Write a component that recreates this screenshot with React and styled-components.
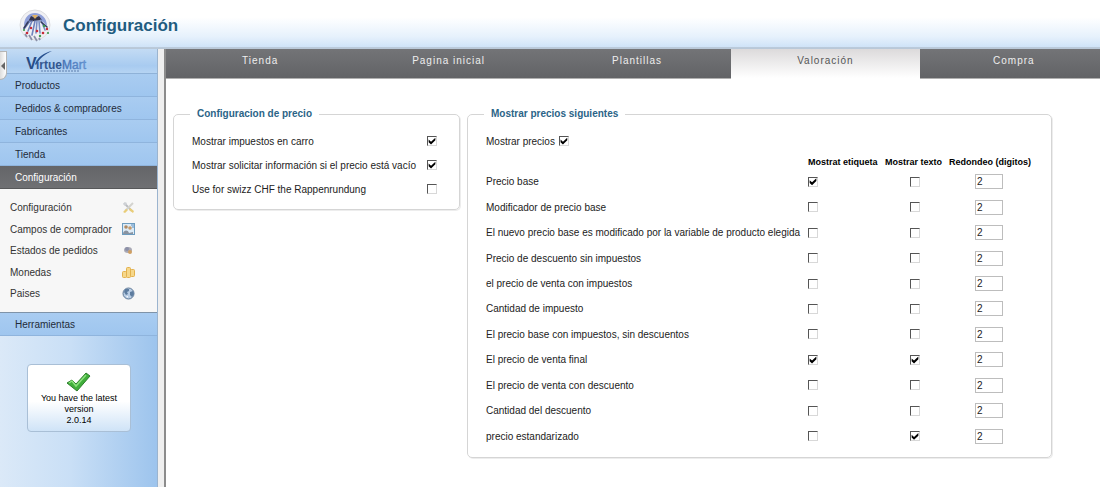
import React, { useState } from "react";
import styled, { createGlobalStyle } from "styled-components";

const GlobalStyle = createGlobalStyle`
    * {
        box-sizing: border-box;
    }
    body {
        margin: 0;
        background-color: #ffffff;
        color: #222222;
        font-family: "Liberation Sans", Arial, sans-serif;
        font-size: 10px;
    }
`

const Page = styled.div`
    display: flex;
    flex-direction: column;
    min-height: 100vh;
`

const Header = styled.header`
    display: flex;
    align-items: center;
    gap: 12px;
    height: 49px;
    padding: 2px 0 0 19px;
    background: linear-gradient(#ffffff 0%, #ffffff 35%, #e6f1fc 75%, #cfe3f7 96%, #b9c8d8 97%);
`

const Title = styled.h1`
    margin: 0;
    font-size: 17px;
    color: #1f5c80;
`

const Body = styled.div`
    display: flex;
    flex: 1;
`

const Sidebar = styled.aside`
    flex: 0 0 158px;
    border-right: 1px solid #9bb4cf;
    background: linear-gradient(90deg, #dbe9f8 0%, #c9dff6 45%, #9dc4ed 100%);
`

const Gutter = styled.div`
    flex: 0 0 8px;
    background-color: #efefef;
    border-right: 2px solid #8c8c8c;
`

const LogoBar = styled.div`
    position: relative;
    height: 25px;
    padding-left: 26px;
    border-bottom: 1px solid #8fb2d8;
    background: linear-gradient(#c3dbf4, #a8cbf0 70%, #b6d4f3);
`

const Collapse = styled.button`
    position: absolute;
    left: 0;
    top: 2px;
    width: 7px;
    height: 29px;
    padding: 0;
    border: 1px solid #b5b5b5;
    border-left: 0;
    border-radius: 0 0 8px 0;
    background: linear-gradient(90deg, #dddddd, #ffffff);
    line-height: 0;
`

const MenuLink = styled.a`
    display: block;
    height: 23px;
    padding-left: 15px;
    line-height: 24px;
    text-decoration: none;
    color: ${(props) => (props.$active ? "#ffffff" : "#1f2b3a")};
    border-bottom: 1px solid ${(props) => (props.$active ? "#57585a" : "#8fb4dd")};
    background: ${(props) =>
        props.$active ? "linear-gradient(#646568, #6f7073)" : "linear-gradient(#a9ccf1, #9fc6ef)"};
`

const SubMenu = styled.ul`
    display: flex;
    flex-direction: column;
    justify-content: space-between;
    min-height: 124px;
    margin: 0;
    padding: 8px 0 8px 10px;
    list-style: none;
    background-color: #f7f7f7;
    border-bottom: 1px solid #7f93a8;
`

const SubItem = styled.li`
    display: flex;
    align-items: center;
    justify-content: space-between;
    height: 21px;
    padding-right: 22px;
`

const SubLink = styled.a`
    color: #333333;
    text-decoration: none;
`

const VersionBox = styled.div`
    display: flex;
    flex-direction: column;
    align-items: center;
    width: 104px;
    height: 68px;
    margin: 28px 0 0 27px;
    padding: 7px 10px 0;
    border: 1px solid #a9bfd6;
    border-radius: 4px;
    background: linear-gradient(#ffffff 55%, #cfe3f7);
    font-size: 9px;
    line-height: 11px;
    text-align: center;
    color: #000000;
`

const Main = styled.main`
    flex: 1;
    min-width: 0;
    overflow: hidden;
`

const Tabs = styled.nav`
    display: flex;
    width: calc(100% + 8px);
    height: 30px;
`

const Tab = styled.button`
    flex: 1;
    padding: 0 0 7px;
    border: 0;
    border-bottom: 1px solid ${(props) => (props.$active ? "#ffffff" : "#b0b0b0")};
    background: ${(props) =>
        props.$active ? "linear-gradient(#dcdadb, #ffffff)" : "linear-gradient(#737477, #626366)"};
    color: ${(props) => (props.$active ? "#555555" : "#eeeeee")};
    font-family: inherit;
    font-size: 10px;
    letter-spacing: 1px;
`

const Panels = styled.div`
    display: flex;
    align-items: flex-start;
    gap: 7px;
    padding: 28px 0 28px 7px;
`

const Panel = styled.fieldset`
    margin: 0;
    padding: 0 18px 8px;
    border: 1px solid #d5d5d5;
    border-radius: 5px;
    box-shadow: 1px 1px 0 #ededed;
`

const Legend = styled.legend`
    height: 14px;
    margin-left: -2px;
    padding: 0 7px;
    line-height: 14px;
    font-weight: bold;
    color: #2b6487;
`

const OptionTable = styled.table`
    border-collapse: collapse;
    margin-top: 8px;

    th {
        font-weight: normal;
        text-align: left;
        padding: 0;
        width: 235px;
    }
    td {
        padding: 0;
        width: 14px;
    }
    tr {
        height: 24px;
    }
`

const ShowPrices = styled.label`
    display: flex;
    align-items: center;
    gap: 4px;
    height: 24px;
    margin-top: 8px;
`

const PriceTable = styled.table`
    border-collapse: collapse;
    margin-top: 2px;
    height: 294px;

    thead th {
        height: 14px;
        padding: 0;
        font-size: 9px;
        text-align: left;
        white-space: nowrap;
        color: #000000;
    }
    tbody th {
        padding: 0;
        font-weight: normal;
        text-align: left;
        white-space: nowrap;
    }
    td {
        padding: 0;
    }
    td + td {
        padding-right: 4px;
    }
`

const Col = styled.col`
    width: ${(props) => props.$width}px;
`

const Check = styled.input.attrs({ type: "checkbox" })`
    appearance: none;
    display: block;
    width: 10px;
    height: 10px;
    margin: ${(props) => (props.$centered ? "0 auto" : "0")};
    border: 1px solid;
    border-color: #555555 #d8d8d8 #d8d8d8 #555555;
    background-color: #ffffff;

    &:checked::before {
        content: "";
        display: block;
        width: 8px;
        height: 8px;
        background-color: #000000;
        clip-path: polygon(8% 32%, 38% 58%, 92% 8%, 92% 42%, 38% 94%, 8% 66%);
    }
`

const Digits = styled.input`
    display: block;
    width: 28px;
    height: 15px;
    margin: 0 auto;
    padding: 0 1px;
    border: 1px solid #bdbdbd;
    background-color: #ffffff;
    color: #222222;
    font-family: inherit;
    font-size: 10px;
`

const HeaderIcon = () => (
    <svg width="32" height="34" viewBox="0 0 32 34" aria-hidden="true">
        <circle cx="16" cy="16" r="15" fill="#f0f0f4" stroke="#dddddf" />
        <path d="M5 17C5 8 10 4 16 4s12 5 12 13l-5-5-7-3-6 3z" fill="#8f9fd8" />
        <path d="M12 7l4 2 4-2 3 4-7 1-7 1z" fill="#34344c" />
        <path d="M13 6l6 0-3 4z" fill="#e0b060" />
        <g fill="none" strokeWidth="1.6" strokeLinecap="round">
            <path d="M11 12L5 20M13 12L9 22M16 12l-3 14" stroke="#6f83bd" />
            <path d="M18 12l-1 12M20 12l1 12M22 11l4 10" stroke="#7a8fc4" />
            <path d="M9 13l-4 6M22 13l6 5" stroke="#353a5c" />
        </g>
        <g fill="#c62a38">
            <circle cx="8" cy="24" r="1.3" />
            <circle cx="12" cy="19" r="1.2" />
            <circle cx="18" cy="22" r="1.3" />
            <circle cx="24" cy="24" r="1.3" />
            <circle cx="28" cy="20" r="1.2" />
        </g>
        <g fill="#3d9a4c">
            <circle cx="25" cy="17" r="1.2" />
            <circle cx="21" cy="27" r="1.2" />
            <circle cx="29" cy="24" r="1.1" />
            <circle cx="5" cy="21" r="1.1" />
        </g>
        <path d="M10 26l3 5M15 27l3 5M6 25l2 3M20 29l1 2" stroke="#8a8fa8" strokeWidth="1.8" />
    </svg>
)

const Logo = () => (
    <svg width="62" height="24" viewBox="0 0 62 24" role="img" aria-label="VirtueMart">
        <defs>
            <linearGradient id="mart" x1="0" x2="1">
                <stop offset="0" stopColor="#2f5797" />
                <stop offset="1" stopColor="#6f9fdc" />
            </linearGradient>
        </defs>
        <path d="M9 15C12 8 17 4 26 2 19 5 14 9 10 16z" fill="#27508f" />
        <text x="0" y="20" fontSize="16" fontWeight="bold" fill="#284c85">V</text>
        <text x="10" y="20" fontSize="12" fontWeight="bold" fill="#33588f">irtue</text>
        <text x="36" y="20" fontSize="12" fill="url(#mart)" stroke="#5787c8" strokeWidth="0.4">Mart</text>
        <path d="M15 22h38" stroke="#5c7dab" strokeDasharray="2 1" />
    </svg>
)

const ToolsIcon = () => (
    <svg width="13" height="13" viewBox="0 0 13 13" aria-hidden="true">
        <path d="M2 2l8 8" stroke="#b9bcc0" strokeWidth="2" />
        <path d="M1 3l3-2 1 2-2 2z" fill="#cfd2d6" />
        <path d="M11 2L3 10" stroke="#d3d3cf" strokeWidth="2" />
        <path d="M1 11l3-3 2 1-3 3zM8 7l4 3-1 2-4-3z" fill="#e9cd78" />
    </svg>
)

const FieldsIcon = () => (
    <svg width="13" height="13" viewBox="0 0 13 13" aria-hidden="true">
        <rect x="0.5" y="0.5" width="12" height="11" fill="#dcebf7" stroke="#6d9cbf" />
        <circle cx="4" cy="4" r="1.8" fill="#b08a62" />
        <circle cx="8" cy="5" r="1.8" fill="#c79a6a" />
        <path d="M1 11c0-4 5-5 6-1l4-1v2z" fill="#8a93a0" />
        <path d="M9 2h3M10 4h2" stroke="#5b8fc0" />
    </svg>
)

const StatesIcon = () => (
    <svg width="13" height="13" viewBox="0 0 13 13" aria-hidden="true">
        <ellipse cx="6" cy="6" rx="4" ry="3" fill="#a9a9b5" />
        <circle cx="5" cy="5" r="2" fill="#8c90a8" />
        <circle cx="8" cy="8" r="2" fill="#cf9f62" />
    </svg>
)

const CoinsIcon = () => (
    <svg width="13" height="13" viewBox="0 0 13 13" aria-hidden="true">
        <g fill="#f6d78a" stroke="#e3b14c">
            <rect x="0.5" y="5.5" width="4" height="6" rx="1" />
            <rect x="4.5" y="1.5" width="4" height="10" rx="1" />
            <rect x="8.5" y="3.5" width="4" height="7" rx="1" />
        </g>
    </svg>
)

const GlobeIcon = () => (
    <svg width="13" height="13" viewBox="0 0 13 13" aria-hidden="true">
        <circle cx="6.5" cy="6.5" r="5.5" fill="#b9cde4" stroke="#5e7896" />
        <path d="M3 2l4 0 0 2-2 1 1 2-2 1-2-3zM8 5l3-1 1 3-2 3-2-2z" fill="#5d7c9f" />
        <path d="M4 9l2 0 0 2z" fill="#f3f7fb" />
    </svg>
)

const TickIcon = () => (
    <svg width="26" height="21" viewBox="0 0 26 21" aria-hidden="true">
        <path d="M1 11l5-3 4 4L20 1l4 3-13 15z" fill="#3fae3a" stroke="#2c7f2b" />
        <path d="M3 11l3-2 4 5L20 3" fill="none" stroke="#8be07c" strokeWidth="1.5" />
    </svg>
)

const menu = ["Productos", "Pedidos & compradores", "Fabricantes", "Tienda", "Configuración"];

const subMenu = [
    { name: "Configuración", icon: ToolsIcon },
    { name: "Campos de comprador", icon: FieldsIcon },
    { name: "Estados de pedidos", icon: StatesIcon },
    { name: "Monedas", icon: CoinsIcon },
    { name: "Paises", icon: GlobeIcon },
];

const tabs = ["Tienda", "Pagina inicial", "Plantillas", "Valoración", "Compra"];

const options = [
    { id: "tax", name: "Mostrar impuestos en carro", checked: true },
    { id: "ask", name: "Mostrar solicitar información si el precio está vacío", checked: true },
    { id: "chf", name: "Use for swizz CHF the Rappenrundung", checked: false },
];

const prices = [
    { name: "Precio base", label: true, text: false },
    { name: "Modificador de precio base", label: false, text: false },
    { name: "El nuevo precio base es modificado por la variable de producto elegida", label: false, text: false },
    { name: "Precio de descuento sin impuestos", label: false, text: false },
    { name: "el precio de venta con impuestos", label: false, text: false },
    { name: "Cantidad de impuesto", label: false, text: false },
    { name: "El precio base con impuestos, sin descuentos", label: false, text: false },
    { name: "El precio de venta final", label: true, text: true },
    { name: "El precio de venta con descuento", label: false, text: false },
    { name: "Cantidad del descuento", label: false, text: false },
    { name: "precio estandarizado", label: false, text: true },
];

const App = () => {
    const [activeTab, setActiveTab] = useState("Valoración");

    return (
        <Page>
            <GlobalStyle />
            <Header>
                <HeaderIcon />
                <Title>Configuración</Title>
            </Header>
            <Body>
                <Sidebar>
                    <LogoBar>
                        <Logo />
                        <Collapse aria-label="Ocultar menú">
                            <svg width="5" height="8" viewBox="0 0 5 8">
                                <path d="M4 0v8L0 4z" fill="#666666" />
                            </svg>
                        </Collapse>
                    </LogoBar>
                    {menu.map((name) => (
                        <MenuLink key={name} href="#" $active={name === "Configuración"}>{name}</MenuLink>
                    ))}
                    <SubMenu>
                        {subMenu.map(({ name, icon: Icon }) => (
                            <SubItem key={name}>
                                <SubLink href="#">{name}</SubLink>
                                <Icon />
                            </SubItem>
                        ))}
                    </SubMenu>
                    <MenuLink href="#">Herramientas</MenuLink>
                    <VersionBox>
                        <TickIcon />
                        <span>You have the latest version</span>
                        <span>2.0.14</span>
                    </VersionBox>
                </Sidebar>
                <Gutter />
                <Main>
                    <Tabs>
                        {tabs.map((name) => (
                            <Tab key={name} $active={name === activeTab} onClick={() => setActiveTab(name)}>
                                {name}
                            </Tab>
                        ))}
                    </Tabs>
                    <Panels>
                        <Panel>
                            <Legend>Configuracion de precio</Legend>
                            <OptionTable>
                                <tbody>
                                    {options.map((option) => (
                                        <tr key={option.id}>
                                            <th scope="row"><label htmlFor={option.id}>{option.name}</label></th>
                                            <td><Check id={option.id} defaultChecked={option.checked} /></td>
                                        </tr>
                                    ))}
                                </tbody>
                            </OptionTable>
                        </Panel>
                        <Panel>
                            <Legend>Mostrar precios siguientes</Legend>
                            <ShowPrices>
                                Mostrar precios
                                <Check defaultChecked />
                            </ShowPrices>
                            <PriceTable>
                                <colgroup>
                                    <Col $width={322} />
                                    <Col $width={77} />
                                    <Col $width={64} />
                                    <Col $width={84} />
                                </colgroup>
                                <thead>
                                    <tr>
                                        <td></td>
                                        <th scope="col">Mostrat etiqueta</th>
                                        <th scope="col">Mostrar texto</th>
                                        <th scope="col">Redondeo (digitos)</th>
                                    </tr>
                                </thead>
                                <tbody>
                                    {prices.map((price) => (
                                        <tr key={price.name}>
                                            <th scope="row">{price.name}</th>
                                            <td><Check aria-label={price.name + " etiqueta"} defaultChecked={price.label} /></td>
                                            <td><Check $centered aria-label={price.name + " texto"} defaultChecked={price.text} /></td>
                                            <td><Digits aria-label={price.name + " digitos"} defaultValue="2" /></td>
                                        </tr>
                                    ))}
                                </tbody>
                            </PriceTable>
                        </Panel>
                    </Panels>
                </Main>
            </Body>
        </Page>
    )
}

export default App;
